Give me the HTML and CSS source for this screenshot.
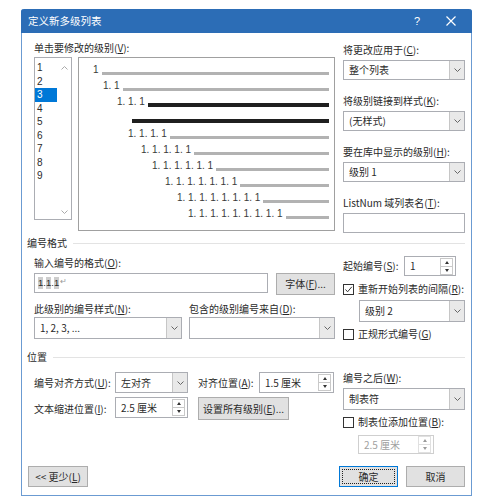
FILE: index.html
```html
<!DOCTYPE html>
<html lang="zh-CN">
<head>
  <meta charset="UTF-8" />
  <title>定义新多级列表</title>
  <link rel="stylesheet" href="styles.css">
</head>
<body>
  <div class="dialog">
    <div class="titlebar">
      <span class="title">定义新多级列表</span>
      <span class="help">?</span>
      <span class="close">
        <svg width="10" height="10" viewBox="0 0 10 10"><path d="M0.5 0.5L9.5 9.5M9.5 0.5L0.5 9.5" stroke="#fff" stroke-width="1.2"/></svg>
      </span>
    </div>

    <div class="content">
      <!-- level picker + preview -->
      <div class="top">
        <div class="levels">
          <div class="label">单击要修改的级别(<u>V</u>):</div>
          <div class="level-row">
            <div class="level-list">
              <div class="items">
                <div>1</div><div>2</div><div class="sel">3</div><div>4</div><div>5</div>
                <div>6</div><div>7</div><div>8</div><div>9</div>
              </div>
              <div class="scroll">
                <svg width="7" height="4" viewBox="0 0 7 4"><path d="M0.5 3.5L3.5 0.5L6.5 3.5" fill="none" stroke="#aaa"/></svg>
                <svg width="7" height="4" viewBox="0 0 7 4"><path d="M0.5 0.5L3.5 3.5L6.5 0.5" fill="none" stroke="#aaa"/></svg>
              </div>
            </div>
            <div class="preview">
              <div class="prow i1"><span>1</span><i class="bar"></i></div>
              <div class="prow i2"><span>1. 1</span><i class="bar"></i></div>
              <div class="prow i3"><span>1. 1. 1</span><i class="bar dark"></i></div>
              <div class="prow i4"><i class="bar dark"></i></div>
              <div class="prow i5"><span>1. 1. 1. 1</span><i class="bar"></i></div>
              <div class="prow i6"><span>1. 1. 1. 1. 1</span><i class="bar"></i></div>
              <div class="prow i7"><span>1. 1. 1. 1. 1. 1</span><i class="bar"></i></div>
              <div class="prow i8"><span>1. 1. 1. 1. 1. 1. 1</span><i class="bar"></i></div>
              <div class="prow i9"><span>1. 1. 1. 1. 1. 1. 1. 1</span><i class="bar"></i></div>
              <div class="prow i10"><span>1. 1. 1. 1. 1. 1. 1. 1. 1</span><i class="bar"></i></div>
            </div>
          </div>
        </div>

        <div class="side">
          <div class="group">
            <div class="label">将更改应用于(<u>C</u>):</div>
            <div class="combo"><span class="val">整个列表</span><span class="drop"><svg width="7" height="4" viewBox="0 0 7 4"><path d="M0.5 0.5L3.5 3.5L6.5 0.5" fill="none" stroke="#666"/></svg></span></div>
          </div>
          <div class="group">
            <div class="label">将级别链接到样式(<u>K</u>):</div>
            <div class="combo"><span class="val">(无样式)</span><span class="drop"><svg width="7" height="4" viewBox="0 0 7 4"><path d="M0.5 0.5L3.5 3.5L6.5 0.5" fill="none" stroke="#666"/></svg></span></div>
          </div>
          <div class="group">
            <div class="label">要在库中显示的级别(<u>H</u>):</div>
            <div class="combo"><span class="val">级别 1</span><span class="drop"><svg width="7" height="4" viewBox="0 0 7 4"><path d="M0.5 0.5L3.5 3.5L6.5 0.5" fill="none" stroke="#666"/></svg></span></div>
          </div>
          <div class="group">
            <div class="label">ListNum 域列表名(<u>T</u>):</div>
            <div class="field"></div>
          </div>
        </div>
      </div>

      <!-- number format -->
      <div class="section-head"><span>编号格式</span><i></i></div>
      <div class="fmt">
        <div class="fmt-left">
          <div class="label">输入编号的格式(<u>O</u>):</div>
          <div class="fmt-input-row">
            <div class="field fmt-field"><b>1</b>.<b>1</b>.<b>1</b><em>↵</em></div>
            <div class="btn font-btn">字体(<u>F</u>)...</div>
          </div>
          <div class="two-cols">
            <div class="col-a">
              <div class="label">此级别的编号样式(<u>N</u>):</div>
              <div class="combo tall"><span class="val">1, 2, 3, ...</span><span class="drop"><svg width="7" height="4" viewBox="0 0 7 4"><path d="M0.5 0.5L3.5 3.5L6.5 0.5" fill="none" stroke="#666"/></svg></span></div>
            </div>
            <div class="col-b">
              <div class="label">包含的级别编号来自(<u>D</u>):</div>
              <div class="combo tall"><span class="val"></span><span class="drop"><svg width="7" height="4" viewBox="0 0 7 4"><path d="M0.5 0.5L3.5 3.5L6.5 0.5" fill="none" stroke="#666"/></svg></span></div>
            </div>
          </div>
        </div>

        <div class="side fmt-side">
          <div class="start-row">
            <span class="label">起始编号(<u>S</u>):</span>
            <div class="spin start-spin"><span class="val">1</span><span class="arrows"><i class="up"></i><i class="down"></i></span></div>
          </div>
          <div class="check-row first-check">
            <span class="box checked"><svg width="9" height="9" viewBox="0 0 9 9"><path d="M1.5 4.5L3.6 6.8L7.8 1.8" fill="none" stroke="#333" stroke-width="1"/></svg></span>
            <span>重新开始列表的间隔(<u>R</u>):</span>
          </div>
          <div class="combo tall restart"><span class="val">级别 2</span><span class="drop"><svg width="7" height="4" viewBox="0 0 7 4"><path d="M0.5 0.5L3.5 3.5L6.5 0.5" fill="none" stroke="#666"/></svg></span></div>
          <div class="check-row legal">
            <span class="box"></span>
            <span>正规形式编号(<u>G</u>)</span>
          </div>
        </div>
      </div>

      <!-- position -->
      <div class="section-head pos-head"><span>位置</span><i></i></div>
      <div class="pos">
        <div class="pos-grid">
          <span class="label">编号对齐方式(<u>U</u>):</span>
          <div class="combo"><span class="val">左对齐</span><span class="drop"><svg width="7" height="4" viewBox="0 0 7 4"><path d="M0.5 0.5L3.5 3.5L6.5 0.5" fill="none" stroke="#666"/></svg></span></div>
          <span></span>
          <span class="label">对齐位置(<u>A</u>):</span>
          <div class="spin"><span class="val">1.5 厘米</span><span class="arrows"><i class="up"></i><i class="down"></i></span></div>

          <span class="label">文本缩进位置(<u>I</u>):</span>
          <div class="spin"><span class="val">2.5 厘米</span><span class="arrows"><i class="up"></i><i class="down"></i></span></div>
          <span></span>
          <div class="btn all-btn">设置所有级别(<u>E</u>)...</div>
        </div>

        <div class="side pos-side">
          <div class="label">编号之后(<u>W</u>):</div>
          <div class="combo tall"><span class="val">制表符</span><span class="drop"><svg width="7" height="4" viewBox="0 0 7 4"><path d="M0.5 0.5L3.5 3.5L6.5 0.5" fill="none" stroke="#666"/></svg></span></div>
          <div class="check-row tab-check">
            <span class="box"></span>
            <span>制表位添加位置(<u>B</u>):</span>
          </div>
          <div class="spin disabled"><span class="val">2.5 厘米</span><span class="arrows"><i class="up"></i><i class="down"></i></span></div>
        </div>
      </div>

      <div class="footer">
        <div class="btn less-btn">&lt;&lt; 更少(<u>L</u>)</div>
        <div class="btn ok-btn"><span>确定</span></div>
        <div class="btn">取消</div>
      </div>
    </div>
  </div>
</body>
</html>
```

FILE: styles.css
```css
body {
  margin: 0;
  background: #fff;
  font-family: "Noto Sans CJK SC", "Noto Sans", sans-serif;
  font-size: 10px;
  line-height: 12px;
  color: #2a2a2a;
}
u { text-decoration: underline; }

.dialog {
  margin: 9px 0 0 21px;
  width: 451px;
  height: 487px;
  box-sizing: border-box;
  border: 1px solid #6b9bd2;
  border-top: none;
  border-radius: 3px 3px 0 0;
  display: flex;
  flex-direction: column;
  background: #fff;
}
.titlebar {
  height: 24px;
  margin: 0 -1px;
  background: #2c6db6;
  color: #fff;
  display: flex;
  align-items: center;
  padding: 0 6px 0 7px;
  border-radius: 3px 3px 0 0;
}
.titlebar .title { font-size: 10.5px; }
.titlebar .help {
  margin-left: auto;
  width: 20px;
  margin-right: 9px;
  text-align: center;
  font-family: "Liberation Sans", sans-serif;
  font-size: 11px;
}
.titlebar .close {
  width: 30px;
  height: 24px;
  display: flex;
  align-items: center;
  justify-content: center;
}

.content {
  flex: 1;
  padding: 9px 6px 8px 12px;
  display: flex;
  flex-direction: column;
}
.label { white-space: nowrap; }

/* top */
.top {
  display: flex;
  gap: 8px;
  align-items: flex-start;
}
.levels { width: 301px; }
.levels > .label { margin-bottom: 3px; }
.level-row {
  display: flex;
  gap: 6px;
  align-items: flex-start;
}
.level-list {
  width: 38px;
  height: 163px;
  box-sizing: border-box;
  border: 1px solid #abadb3;
  display: flex;
}
.items {
  width: 22px;
  padding-top: 3px;
  font-family: "Liberation Sans", sans-serif;
}
.items div {
  height: 13.5px;
  line-height: 13.5px;
  padding-left: 2px;
}
.items .sel {
  background: #0078d7;
  color: #fff;
}
.scroll {
  flex: 1;
  display: flex;
  flex-direction: column;
  justify-content: space-between;
  align-items: center;
  padding: 8px 0 5px;
}
.preview {
  width: 257px;
  height: 174px;
  box-sizing: border-box;
  border: 1px solid #a0a0a0;
  padding: 4px 5px 0 0;
  font-family: "Liberation Sans", sans-serif;
  font-size: 10px;
  color: #3a3a3a;
}
.prow {
  height: 16px;
  display: flex;
  align-items: center;
  white-space: nowrap;
}
.prow span { margin-right: 3px; }
.bar {
  flex: 1;
  height: 3px;
  margin-top: 6px;
  background: #b2b2b2;
}
.bar.dark {
  height: 4px;
  background: #1f1f1f;
}
.i1 { padding-left: 14px; }
.i2 { padding-left: 24px; }
.i3 { padding-left: 38px; }
.i4 { padding-left: 53px; }
.i5 { padding-left: 49px; }
.i6 { padding-left: 62px; }
.i7 { padding-left: 73px; }
.i8 { padding-left: 86px; }
.i9 { padding-left: 98px; }
.i10 { padding-left: 109px; }

.side { width: 122px; }
.top .side { padding-top: 2px; }
.group .label { margin-bottom: 4px; }
.group + .group { margin-top: 15px; }

/* controls */
.combo, .field, .spin {
  height: 20px;
  box-sizing: border-box;
  border: 1px solid #abadb3;
  background: #fff;
  display: flex;
  align-items: center;
}
.combo.tall { height: 22px; }
.combo .val, .spin .val {
  padding-left: 5px;
  white-space: nowrap;
}
.combo .drop {
  margin-left: auto;
  width: 14px;
  align-self: stretch;
  background: #e9e9e9;
  border-left: 1px solid #c6c6c6;
  display: flex;
  align-items: center;
  justify-content: center;
}
.spin .arrows {
  margin-left: auto;
  margin-right: 2px;
  width: 11px;
  height: 15px;
  border: 1px solid #c9c9c9;
  display: flex;
  flex-direction: column;
}
.spin .arrows i {
  flex: 1;
  display: flex;
  align-items: center;
  justify-content: center;
}
.spin .arrows .up { border-bottom: 1px solid #c9c9c9; }
.spin .arrows .up::before {
  content: "";
  border: 2px solid transparent;
  border-bottom: 3px solid #333;
  border-top: none;
}
.spin .arrows .down::before {
  content: "";
  border: 2px solid transparent;
  border-top: 3px solid #333;
  border-bottom: none;
}
.spin.disabled {
  border-color: #cfcfcf;
  color: #a0a0a0;
}
.spin.disabled .arrows { border-color: #e0e0e0; }
.spin.disabled .arrows .up { border-bottom-color: #e0e0e0; }
.spin.disabled .arrows .up::before { border-bottom-color: #9a9a9a; }
.spin.disabled .arrows .down::before { border-top-color: #9a9a9a; }

.btn {
  height: 22px;
  box-sizing: border-box;
  background: #e1e1e1;
  border: 1px solid #adadad;
  display: flex;
  align-items: center;
  justify-content: center;
  white-space: nowrap;
}

.check-row {
  display: flex;
  align-items: center;
  gap: 4px;
  white-space: nowrap;
}
.box {
  width: 11px;
  height: 11px;
  box-sizing: border-box;
  border: 1px solid #333;
  background: #fff;
  display: flex;
  align-items: center;
  justify-content: center;
}

/* sections */
.section-head {
  display: flex;
  align-items: center;
  margin: 4px 0 0 -7px;
}
.section-head i {
  flex: 1;
  height: 1px;
  background: #e3e3e3;
  margin-left: 6px;
}
.pos-head { margin-top: 11px; }

.fmt {
  display: flex;
  gap: 8px;
  align-items: flex-start;
}
.fmt-left {
  width: 301px;
  padding-top: 8px;
}
.fmt-left > .label { margin-bottom: 4px; }
.fmt-input-row {
  display: flex;
  gap: 8px;
  align-items: flex-start;
}
.fmt-field {
  width: 234px;
  padding-left: 3px;
  font-family: "Liberation Sans", sans-serif;
  font-size: 9.5px;
}
.fmt-field b {
  font-weight: normal;
  background: #cdcdcd;
}
.fmt-field em {
  font-style: normal;
  color: #999;
  font-size: 8px;
  margin-left: 1px;
  margin-top: -3px;
}
.font-btn { width: 59px; }
.two-cols {
  display: flex;
  gap: 7px;
  margin-top: 8px;
}
.col-a { width: 148px; }
.col-b { width: 146px; }
.two-cols .label { margin-bottom: 2px; }

.fmt-side { padding-top: 7px; }
.start-row {
  display: flex;
  align-items: center;
}
.start-row .label { width: 61px; }
.start-spin { width: 52px; }
.first-check { margin-top: 7px; }
.restart {
  margin: 5px 0 0 16px;
}
.legal { margin-top: 6px; }

.pos {
  display: flex;
  gap: 8px;
  align-items: flex-start;
}
.pos-grid {
  width: 301px;
  margin-top: 9px;
  display: grid;
  grid-template-columns: 81px 73px 10px 61px 75px;
  grid-template-rows: 21px 23px;
  row-gap: 4px;
  align-items: start;
}
.pos-grid .label { align-self: center; }
.pos-grid .combo, .pos-grid .spin { height: 21px; }
.all-btn {
  grid-column: 4 / 6;
  width: 91px;
  height: 23px;
}
.pos-side { padding-top: 9px; }
.pos-side > .label { margin-bottom: 4px; }
.tab-check { margin-top: 6px; }
.pos-side .spin {
  width: 76px;
  height: 19px;
  margin: 7px 0 0 15px;
}

.footer {
  margin-top: auto;
  display: flex;
  gap: 8px;
}
.footer .btn {
  width: 59px;
  height: 21px;
}
.footer .less-btn {
  margin-left: -6px;
  width: 60px;
  margin-right: auto;
}
.ok-btn {
  border-color: #0078d7 !important;
  padding: 2px;
}
.ok-btn span {
  flex: 1;
  align-self: stretch;
  border: 1px dotted #222;
  display: flex;
  align-items: center;
  justify-content: center;
}
```
